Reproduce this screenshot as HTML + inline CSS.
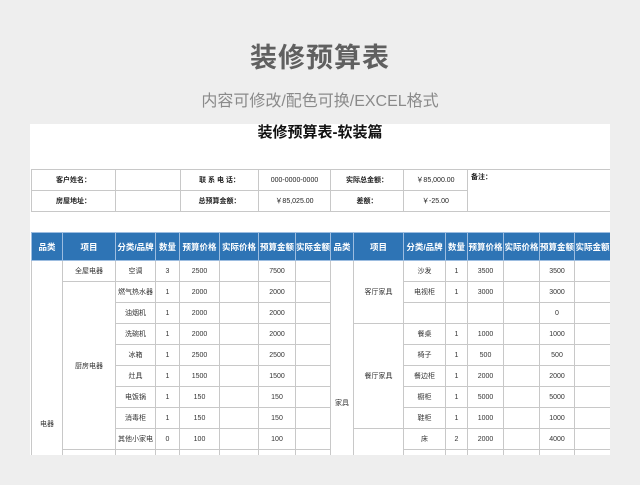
<!DOCTYPE html>
<html><head><meta charset="utf-8"><style>
*{margin:0;padding:0;box-sizing:border-box}
body{width:640px;height:485px;background:#eeeeee;position:relative;overflow:hidden;font-family:"Liberation Sans","Noto Sans CJK SC",sans-serif}
.t1{position:absolute;top:36px;left:0;width:640px;text-align:center;font-size:27px;color:#606060;font-weight:bold;letter-spacing:1px}
.t2{position:absolute;top:87px;left:0;width:640px;text-align:center;font-size:16px;color:#8a8a8a}
.paper{position:absolute;left:30px;top:124px;width:580px;height:331px;background:#fff;overflow:hidden}
.pt{position:absolute;top:0;left:0;width:580px;text-align:center;font-size:15px;font-weight:bold;color:#111;line-height:18px}
table{border-collapse:collapse;table-layout:fixed;position:absolute;left:1px}
td{border:1px solid #c8c8c8;text-align:center;font-size:7px;color:#333;height:21px;padding:0;white-space:nowrap;overflow:hidden}
.info{top:45px;width:579px}
.info td{font-weight:bold;color:#222}
.main{top:108px;width:579px}
.main tr.h td{background:#2e74b5;color:#fff;font-size:8.5px;height:28px;border-color:#9dbde0;font-weight:bold}
</style></head><body>
<div class="t1">装修预算表</div>
<div class="t2">内容可修改/配色可换/EXCEL格式</div>
<div class="paper">
<div class="pt">装修预算表-软装篇</div>
<table class="info">
<colgroup><col style="width:84px"><col style="width:65px"><col style="width:78px"><col style="width:72px"><col style="width:73px"><col style="width:64px"><col style="width:143px"></colgroup>
<tr><td>客户姓名：</td><td></td><td>联 系 电 话：</td><td style="font-weight:normal">000-0000-0000</td><td>实际总金额：</td><td style="font-weight:normal">￥85,000.00</td><td rowspan="2" style="text-align:left;vertical-align:top;padding:2px 3px">备注：</td></tr>
<tr><td>房屋地址：</td><td></td><td>总预算金额：</td><td style="font-weight:normal">￥85,025.00</td><td>差额：</td><td style="font-weight:normal">￥-25.00</td></tr>
</table>
<table class="main">
<colgroup><col style="width:31px"><col style="width:53px"><col style="width:40px"><col style="width:24px"><col style="width:40px"><col style="width:39px"><col style="width:37px"><col style="width:35px"><col style="width:23px"><col style="width:50px"><col style="width:42px"><col style="width:22px"><col style="width:36px"><col style="width:36px"><col style="width:35px"><col style="width:36px"></colgroup>
<tr class="h"><td>品类</td><td>项目</td><td>分类/品牌</td><td>数量</td><td>预算价格</td><td>实际价格</td><td>预算金额</td><td>实际金额</td><td>品类</td><td>项目</td><td>分类/品牌</td><td>数量</td><td>预算价格</td><td>实际价格</td><td>预算金额</td><td>实际金额</td></tr>
<tr><td rowspan="13" style="vertical-align:top;padding-top:158px">电器</td><td>全屋电器</td><td>空调</td><td>3</td><td>2500</td><td></td><td>7500</td><td></td><td rowspan="13" style="vertical-align:top;padding-top:137px">家具</td><td rowspan="3">客厅家具</td><td>沙发</td><td>1</td><td>3500</td><td></td><td>3500</td><td></td></tr>
<tr><td rowspan="8">厨房电器</td><td>燃气热水器</td><td>1</td><td>2000</td><td></td><td>2000</td><td></td><td>电视柜</td><td>1</td><td>3000</td><td></td><td>3000</td><td></td></tr>
<tr><td>油烟机</td><td>1</td><td>2000</td><td></td><td>2000</td><td></td><td></td><td></td><td></td><td></td><td>0</td><td></td></tr>
<tr><td>洗碗机</td><td>1</td><td>2000</td><td></td><td>2000</td><td></td><td rowspan="5">餐厅家具</td><td>餐桌</td><td>1</td><td>1000</td><td></td><td>1000</td><td></td></tr>
<tr><td>冰箱</td><td>1</td><td>2500</td><td></td><td>2500</td><td></td><td>椅子</td><td>1</td><td>500</td><td></td><td>500</td><td></td></tr>
<tr><td>灶具</td><td>1</td><td>1500</td><td></td><td>1500</td><td></td><td>餐边柜</td><td>1</td><td>2000</td><td></td><td>2000</td><td></td></tr>
<tr><td>电饭锅</td><td>1</td><td>150</td><td></td><td>150</td><td></td><td>橱柜</td><td>1</td><td>5000</td><td></td><td>5000</td><td></td></tr>
<tr><td>消毒柜</td><td>1</td><td>150</td><td></td><td>150</td><td></td><td>鞋柜</td><td>1</td><td>1000</td><td></td><td>1000</td><td></td></tr>
<tr><td>其他小家电</td><td>0</td><td>100</td><td></td><td>100</td><td></td><td rowspan="3"></td><td>床</td><td>2</td><td>2000</td><td></td><td>4000</td><td></td></tr>
<tr><td rowspan="2"></td><td></td><td></td><td></td><td></td><td></td><td></td><td></td><td></td><td></td><td></td><td></td><td></td></tr>
<tr><td></td><td></td><td></td><td></td><td></td><td></td><td></td><td></td><td></td><td></td><td></td><td></td></tr>
</table>
</div>
</body></html>
